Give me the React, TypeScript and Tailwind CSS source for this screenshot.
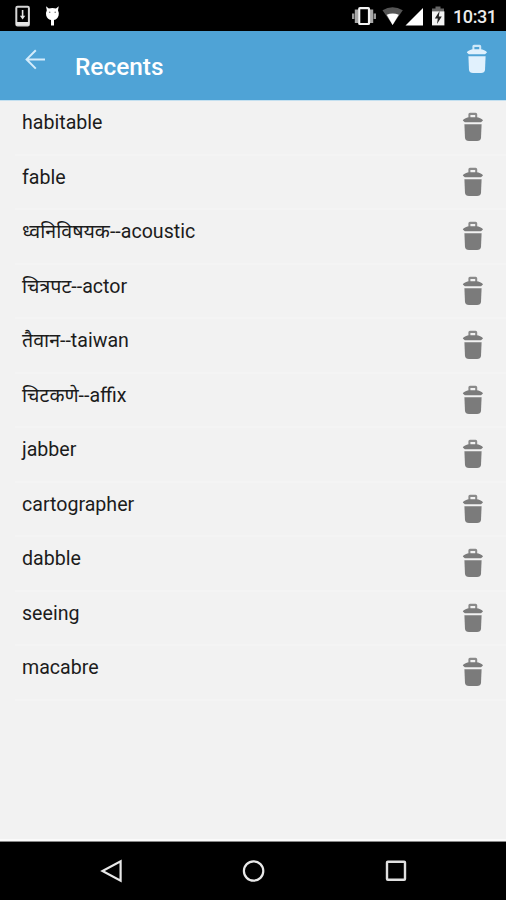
import React from 'react'

const recents = [
    { native: '', word: 'habitable' },
    { native: '', word: 'fable' },
    { native: 'ध्वनिविषयक', word: 'acoustic' },
    { native: 'चित्रपट', word: 'actor' },
    { native: 'तैवान', word: 'taiwan' },
    { native: 'चिटकणे', word: 'affix' },
    { native: '', word: 'jabber' },
    { native: '', word: 'cartographer' },
    { native: '', word: 'dabble' },
    { native: '', word: 'seeing' },
    { native: '', word: 'macabre' },
]

function TrashIcon({ className }: { className: string }) {
    return (
        <svg className={className} viewBox="0 0 22 30" fill="currentColor">
            <path d="M6.4 6V2.2Q6.4 .7 8 .7h5.6q1.6 0 1.6 1.5V6h-2V2.9H8.4V6z" opacity=".88" />
            <path d="M.8 8.6Q1.2 7.2 3.6 6.2 5.4 5.3 7.4 5.3h7q2 0 3.8.9 2.4 1 2.8 2.4L19 10.2H2.8z" />
            <path d="M2.4 12.2h17.2l-.6 13.8q-.4 3-4 3H7q-3.6 0-4-3z" />
        </svg>
    )
}

function StatusBar() {
    return (
        <div className="flex h-[31px] shrink-0 items-center bg-black text-white">
            {/* Download */}
            <svg className="ml-[14px] h-[22px] w-[18px]" viewBox="0 0 18 22" fill="none">
                <rect x="2.3" y="1.8" width="12.6" height="18.6" rx="1.2" stroke="#d6d6d6" strokeWidth="2" />
                <path d="M2 17h13v3H2z" fill="#e6e6e6" />
                <path d="M8.6 5v6" stroke="#e6e6e6" strokeWidth="1.6" />
                <path d="M5.9 10.8h5.4l-2.7 3.7z" fill="#e6e6e6" />
            </svg>
            {/* Debug */}
            <svg className="ml-[12px] h-[22px] w-[18px]" viewBox="0 0 18 22">
                <path d="M2 1.2 4.8 3.6Q8.4 2.5 12 3.6L14.8 1.2 14 5.2Q15.3 8 14.6 10.5 13.5 14.2 10 15v5.5H7V15Q3.3 14.2 2.2 10.5 1.5 8 2.8 5.2z" fill="#fff" />
                <circle cx="5.7" cy="7.2" r=".8" fill="#777" />
                <circle cx="11.2" cy="7.2" r=".8" fill="#777" />
            </svg>
            <div className="flex-1" />
            {/* Vibrate */}
            <svg className="h-[22px] w-[24px]" viewBox="0 0 24 22" fill="none">
                <path d="M4.4 4.5v13.5M19.6 4.5v13.5" stroke="#a8a8a8" strokeWidth="3.2" />
                <path d="M1.2 8.5v5.5M22.8 8.5v5.5" stroke="#999" strokeWidth="2.4" />
                <rect x="7.2" y="3.2" width="9.8" height="15.8" rx=".8" stroke="#f4f4f4" strokeWidth="2.2" />
            </svg>
            {/* Wifi */}
            <svg className="ml-[6px] h-[22px] w-[22px]" viewBox="0 0 22 22">
                <path d="M.5 5.3Q10.5-.8 20.8 5.3L10.6 20z" fill="#555" />
                <path d="M4.7 9.8Q10.6 7.4 16.8 9.8L10.6 20z" fill="#fff" />
            </svg>
            {/* Signal */}
            <svg className="ml-[1px] h-[22px] w-[19px]" viewBox="0 0 19 22">
                <path d="M.5 20.5 18 3v17.5z" fill="#fff" />
            </svg>
            {/* Battery */}
            <svg className="ml-[7px] h-[22px] w-[15px]" viewBox="0 0 15 22">
                <path d="M4.5 1.6h5v2H13v5.6H1V3.6h3.5z" fill="#666" />
                <path d="M1 6.4h12.4v14H1z" fill="#f4f4f4" />
                <path d="M8.6 6 3.8 13.6h3L6 19l4.8-7.4H7.8z" fill="#222" />
            </svg>
            <span className="mt-[3px] mr-[9px] ml-[7px] w-[44px] text-[18px] leading-none font-medium tracking-[-0.4px] whitespace-nowrap text-[#ececec]">10:31</span>
        </div>
    )
}

function Header() {
    return (
        <header className="flex h-[69px] shrink-0 items-start bg-[#4fa3d6] text-white">
            <svg className="mt-[18px] ml-[25px] h-[21px] w-[21px]" viewBox="0 0 21 21" fill="none" stroke="#d5ecfb" strokeWidth="2">
                <path d="M20 10.4H1.9M10.8 1.2 1.6 10.4l9.2 9.2" />
            </svg>
            <h1 className="mt-[21px] ml-[29px] flex-1 text-[24.4px] leading-[30px] font-medium">Recents</h1>
            <TrashIcon className="mt-[13px] mr-[18px] h-[30px] w-[22px] text-[#e1f1fd]" />
        </header>
    )
}

function NavigationBar() {
    return (
        <nav className="flex h-[59px] shrink-0 items-center border-t border-[#888] bg-black pb-px pl-[100px]">
            <svg className="h-[24px] w-[23px]" viewBox="0 0 23 24" fill="none" stroke="#e8e8e8" strokeWidth="2.2">
                <path d="M20.6 2.3v19.4L2.5 12z" />
            </svg>
            <svg className="ml-[119px] h-[24px] w-[24px]" viewBox="0 0 24 24" fill="none" stroke="#e8e8e8" strokeWidth="2.2">
                <circle cx="11.6" cy="12" r="9.7" />
            </svg>
            <svg className="ml-[118px] h-[24px] w-[24px]" viewBox="0 0 24 24" fill="none" stroke="#e0e0e0" strokeWidth="2.4">
                <rect x="3" y="2.8" width="18" height="18" rx=".8" />
            </svg>
        </nav>
    )
}

export default function App() {
    return (
        <div className="flex h-[900px] w-[506px] flex-col overflow-hidden bg-[#f2f2f2] font-['Roboto','Noto_Sans',sans-serif]">
            <StatusBar />
            <Header />
            <main className="flex-1 border-t border-b-2 border-t-[#c4e0f0] border-b-[#fafafa]">
                <ul>
                    {recents.map((item) => (
                        <li key={item.word} className="flex h-[54.5px] items-start pl-[15px]">
                            <div className="flex h-full flex-1 items-start border-b-2 border-[#f4f4f4] pl-[7px]">
                                <div className="mt-[10px] flex-1 text-[19.6px] leading-[24px] whitespace-nowrap text-[#1c1c1c]">
                                    {item.native && <span>{item.native}--</span>}
                                    {item.word}
                                </div>
                                <TrashIcon className="mt-[11px] mr-[22px] h-[30px] w-[22px] text-[#7b7b7b]" />
                            </div>
                        </li>
                    ))}
                </ul>
            </main>
            <NavigationBar />
        </div>
    )
}
